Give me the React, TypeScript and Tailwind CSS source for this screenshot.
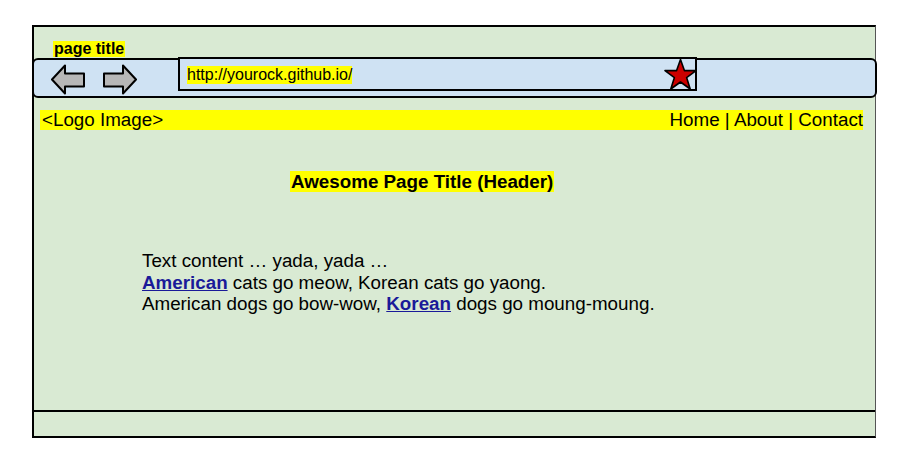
const BackArrow = () => (
  <svg width="34" height="31" viewBox="0 0 34 31" className="block">
    <polygon
      points="1,15.5 14,1.5 14,9.5 33,9.5 33,22.5 14,22.5 14,29.5"
      fill="#b7b7b7"
      stroke="#000"
      strokeWidth="2"
      strokeLinejoin="round"
    />
  </svg>
);

const ForwardArrow = () => (
  <svg width="34" height="31" viewBox="0 0 34 31" className="block">
    <polygon
      points="33,15.5 20,1.5 20,9.5 1,9.5 1,22.5 20,22.5 20,29.5"
      fill="#b7b7b7"
      stroke="#000"
      strokeWidth="2"
      strokeLinejoin="round"
    />
  </svg>
);

const Star = () => (
  <svg width="35" height="33" viewBox="0 0 35 33" className="block">
    <polygon
      points="17.5,1.5 21.4,12.6 33,12.6 23.6,19.6 27.2,31 17.5,24 7.8,31 11.4,19.6 2,12.6 13.6,12.6"
      fill="#cc0000"
      stroke="#000"
      strokeWidth="1.6"
      strokeLinejoin="round"
    />
  </svg>
);

export default function App() {
  return (
    <div
      className="min-h-screen bg-white pt-[25px] pl-[32px] text-black"
      style={{ fontFamily: '"Liberation Sans", Arial, sans-serif' }}
    >
      <div className="flex h-[413px] w-[844px] flex-col border-t-2 border-l-2 border-b-2 border-r border-black border-r-[#555] bg-[#d9ead3]">
        {/* tab */}
        <div className="h-[31px] pl-[19px] pt-[10px]">
          <span className="inline-block bg-[#ffff00] px-[1px] text-[16px] font-bold leading-[16px]">page title</span>
        </div>

        {/* toolbar */}
        <div className="-ml-[2px] flex h-[40px] w-[845px] items-start rounded-[6px] border-2 border-black bg-[#cfe2f3]">
          <div className="ml-[17px] mt-[4px] flex gap-[18px]">
            <BackArrow />
            <ForwardArrow />
          </div>
          <div className="-mt-[3px] ml-[41px] flex h-[34px] w-[519px] items-center border-2 border-black bg-[#cfe2f3]">
            <span className="ml-[7px] mt-[1px] bg-[#ffff00] text-[16px] leading-[18px]">http://yourock.github.io/</span>
            <div className="ml-auto -mr-[3px]">
              <Star />
            </div>
          </div>
        </div>

        {/* nav */}
        <div className="ml-[6px] mt-[12px] flex h-[20px] w-[823px] items-center justify-between bg-[#ffff00] pl-[2px] text-[18.8px] leading-[20px]">
          <span>&lt;Logo Image&gt;</span>
          <span>Home | About | Contact</span>
        </div>

        <div className="flex-1">
          <div className="mt-[41px] pl-[256px] text-[18.8px] font-bold leading-[21px]">
            <span className="bg-[#ffff00] px-[1px]">Awesome Page Title (Header)</span>
          </div>

          <div className="mt-[58px] pl-[108px] text-[18.8px] leading-[21.7px]">
            <p>Text content … yada, yada …</p>
            <p>
              <a href="#" className="font-bold text-[#1a1a99] underline">American</a> cats go meow, Korean cats go yaong.
            </p>
            <p>
              American dogs go bow-wow, <a href="#" className="font-bold text-[#1a1a99] underline">Korean</a> dogs go moung-moung.
            </p>
          </div>
        </div>

        {/* status bar */}
        <div className="h-[26px] border-t-2 border-black" />
      </div>
    </div>
  );
}
